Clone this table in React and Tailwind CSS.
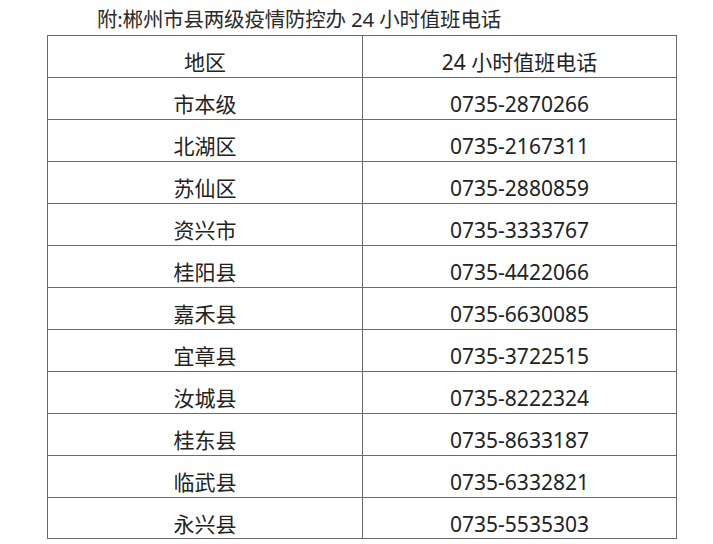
import React from "react";

const rows = [
  ["市本级", "0735-2870266"],
  ["北湖区", "0735-2167311"],
  ["苏仙区", "0735-2880859"],
  ["资兴市", "0735-3333767"],
  ["桂阳县", "0735-4422066"],
  ["嘉禾县", "0735-6630085"],
  ["宜章县", "0735-3722515"],
  ["汝城县", "0735-8222324"],
  ["桂东县", "0735-8633187"],
  ["临武县", "0735-6332821"],
  ["永兴县", "0735-5535303"],
];

function Row({ a, b, last }) {
  return (
    <div
      className={
        "grid grid-cols-[315px_1fr] h-[42px] border-t border-[#6a6a6a]" +
        (last ? " border-b" : "")
      }
    >
      <div className="flex items-center justify-center pt-[12px] border-r border-[#6a6a6a]">
        {a}
      </div>
      <div className="flex items-center justify-center pt-[12px]">{b}</div>
    </div>
  );
}

export default function App() {
  return (
    <div
      className="w-[713px] h-[544px] bg-white overflow-hidden text-[#222] text-[21px] leading-[21px]"
      style={{ fontFamily: '"Noto Sans", "Noto Sans CJK SC", sans-serif' }}
    >
      <div className="h-[35px] pl-[97px] pt-[9px] text-[20.5px] tracking-[-0.2px] text-[#2a2a2a] whitespace-nowrap">
        附:郴州市县两级疫情防控办 24 小时值班电话
      </div>
      <div className="ml-[47px] w-[630px] border-l border-r border-[#6a6a6a]">
        <Row a="地区" b="24 小时值班电话" />
        {rows.map((r, i) => (
          <Row key={r[0]} a={r[0]} b={r[1]} last={i === rows.length - 1} />
        ))}
      </div>
    </div>
  );
}
